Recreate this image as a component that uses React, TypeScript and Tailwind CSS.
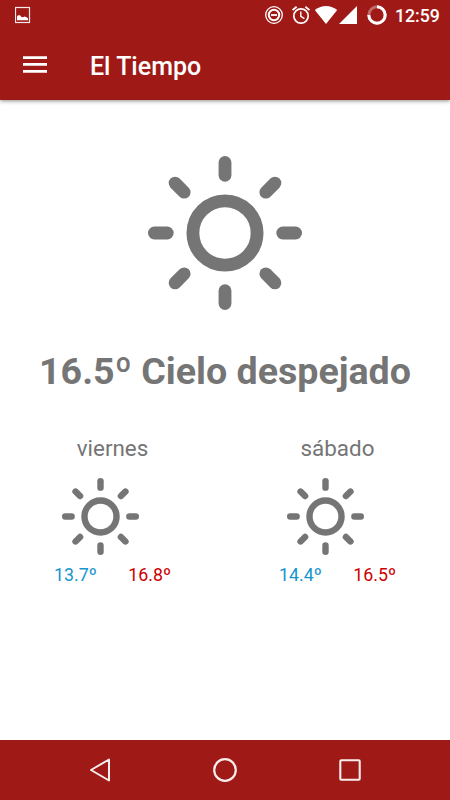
import React from 'react';

const RAYS = [0, 45, 90, 135, 180, 225, 270, 315];

function Sun({ className }: { className: string }) {
  return (
    <svg viewBox="0 0 12 12" className={className} fill="none" stroke="#757575" strokeLinecap="round">
      <circle cx="6" cy="6" r="2.5" />
      {RAYS.map((a) => (
        <path key={a} d="M6 .5v1" transform={`rotate(${a} 6 6)`} />
      ))}
    </svg>
  );
}

function StatusBar() {
  return (
    <div className="flex h-[30px] items-center pl-[15px] pr-[11px]">
      <svg className="h-[30px] w-4" viewBox="15 0 16 30">
        <rect x="15.5" y="7.5" width="14" height="15" fill="none" stroke="#fff" strokeOpacity=".9" strokeWidth="1.2" />
        <path d="M17 20.2v-3.6l1-1.4h2l1.5 1.8 1.5.2 1.8-.8 1.7.8 1.5 1v2z" fill="#fff" />
      </svg>
      <svg className="ml-auto h-[30px] w-[130px]" viewBox="260 0 130 30" fill="none" stroke="#fff">
        <circle cx="274" cy="15" r="8.3" strokeWidth="1.3" />
        <circle cx="274" cy="15" r="5.2" strokeWidth="2" />
        <path d="M271 15h6" strokeWidth="1.8" />
        <circle cx="301" cy="16" r="7.2" strokeWidth="1.7" />
        <path d="M300.8 11.5v4.8l3.6 2.4" strokeWidth="1.4" />
        <path d="M292.5 10.1l4.1-3.4M309.5 10.1l-4.1-3.4" strokeWidth="1.8" />
        <path d="M314.8 10Q326 2.2 337.2 10L326 24z" fill="#fff" stroke="none" />
        <path d="M357 6v18h-18z" fill="#fff" stroke="none" />
        <circle cx="377" cy="15" r="8.2" strokeOpacity=".35" strokeWidth="3" />
        <path d="M377 6.8A8.2 8.2 0 1 1 368.8 15" strokeWidth="3" />
      </svg>
      <span className="ml-[5px] mt-[2px] w-11 whitespace-nowrap text-[17.7px] font-medium leading-[30px]">12:59</span>
    </div>
  );
}

function Day({ name, min, max }: { name: string; min: string; max: string }) {
  return (
    <section className="flex flex-1 flex-col items-center">
      <h2 className="text-[22.4px] leading-[30px]">{name}</h2>
      <Sun className="mr-6 mt-[15px] size-[77px]" />
      <div className="mt-[8px] flex w-[117px] justify-between text-[17.8px] leading-6">
        <span className="text-[#1795ce]">{min}</span>
        <span className="text-[#cc0000]">{max}</span>
      </div>
    </section>
  );
}

export default function App() {
  return (
    <div className="flex h-[800px] w-[450px] flex-col overflow-hidden bg-white font-[Roboto,sans-serif] text-[#757575]">
      <header className="h-[100px] shrink-0 bg-[#9f1a16] text-white shadow-[0_1px_4px_rgba(0,0,0,0.45)]">
        <StatusBar />
        <div className="flex h-[70px] items-center pl-[23px]">
          <svg className="h-[18px] w-6" viewBox="23 56 24 18" fill="#fff">
            <path d="M23 56.2h24v2.7H23zM23 63.1h24v2.7H23zM23 70h24v2.7H23z" />
          </svg>
          <h1 className="ml-[43px] mt-[4px] whitespace-nowrap text-[25px] font-medium leading-8">El Tiempo</h1>
        </div>
      </header>
      <main className="flex flex-1 flex-col items-center">
        <Sun className="mt-14 size-[154px]" />
        <p className="mt-[36px] whitespace-nowrap text-[37.6px] font-bold leading-[50px]">16.5º Cielo despejado</p>
        <div className="mt-[37px] flex w-full">
          <Day name="viernes" min="13.7º" max="16.8º" />
          <Day name="sábado" min="14.4º" max="16.5º" />
        </div>
      </main>
      <nav className="flex h-[60px] shrink-0 items-center justify-between bg-[#9f1a16] px-[85px]">
        <svg className="size-[30px]" viewBox="0 0 30 30" fill="none" stroke="#fff" strokeOpacity=".92" strokeWidth="2" strokeLinejoin="round">
          <path d="M6 15L24 4.5v21z" />
        </svg>
        <svg className="size-[30px]" viewBox="0 0 30 30" fill="none" stroke="#fff" strokeOpacity=".92" strokeWidth="2.2">
          <circle cx="15" cy="15" r="10.8" />
        </svg>
        <svg className="size-[30px]" viewBox="0 0 30 30" fill="none" stroke="#fff" strokeOpacity=".92" strokeWidth="2.1" strokeLinejoin="round">
          <rect x="5.3" y="5.3" width="19.4" height="19.4" rx="1" />
        </svg>
      </nav>
    </div>
  );
}
